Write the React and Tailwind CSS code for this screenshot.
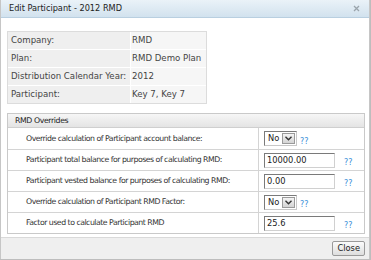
import React from "react";

const font = { fontFamily: '"DejaVu Sans", Verdana, sans-serif' };

function Help() {
  return <span className="text-[8px] text-[#3b8ed8]">??</span>;
}

function Select() {
  return (
    <div className="flex h-[15px] w-[33px] items-stretch border border-[#7a7a7a] border-r-[#c8c8c8] border-b-[#c8c8c8] bg-white">
      <div className="flex flex-1 items-center pl-[3px] text-[8.3px] text-[#222]">No</div>
      <div className="m-[1px] flex w-[13px] items-center justify-center border border-[#9a9a9a] bg-gradient-to-b from-[#f4f4f4] to-[#d4d4d4]">
        <svg width="7" height="5" viewBox="0 0 7 5">
          <path d="M0.5 0.8 L3.5 3.8 L6.5 0.8" fill="none" stroke="#333" strokeWidth="1.4" />
        </svg>
      </div>
    </div>
  );
}

function Input({ value }) {
  return (
    <div className="flex h-[15px] w-[71px] items-center border border-[#7a7a7a] border-r-[#d0d0d0] border-b-[#d0d0d0] bg-white pl-[2px] text-[8.3px] text-[#222]">
      {value}
    </div>
  );
}

export default function App() {
  const info = [
    ["Company:", "RMD"],
    ["Plan:", "RMD Demo Plan"],
    ["Distribution Calendar Year:", "2012"],
    ["Participant:", "Key 7, Key 7"],
  ];
  const rows = [
    ["Override calculation of Participant account balance:", "select"],
    ["Participant total balance for purposes of calculating RMD:", "10000.00"],
    ["Participant vested balance for purposes of calculating RMD:", "0.00"],
    ["Override calculation of Participant RMD Factor:", "select"],
    ["Factor used to calculate Participant RMD", "25.6"],
  ];
  return (
    <div style={font} className="flex h-[260px] w-[371px] flex-col overflow-hidden bg-[#bdbdbd] text-[#333]">
      <div className="flex h-[259px] w-[370px] flex-col border-l border-r border-[#c6c6c6] bg-white">
        <div className="flex h-[18px] items-center justify-between border-b border-[#b9cfe0] bg-gradient-to-b from-[#eaf2f8] to-[#d2e2ee] pl-[8px] pr-[9px]">
          <span className="text-[8.2px] text-[#222]">Edit Participant - 2012 RMD</span>
          <svg width="7" height="7" viewBox="0 0 7 7">
            <path d="M1 1 L6 6 M6 1 L1 6" stroke="#9aa4ac" strokeWidth="1.3" />
          </svg>
        </div>
        <div className="flex flex-1 flex-col px-[6px] pt-[13px]">
          <div className="w-[200px] border border-[#dcdcdc] bg-white">
            {info.map(([l, v], i) => (
              <div key={i} className={`flex h-[17px] ${i > 0 ? "mt-[1px]" : ""}`}>
                <div className="flex w-[122px] items-center bg-[#efefef] pl-[3px] text-[8.6px] text-[#444]">{l}</div>
                <div className="ml-[1px] flex flex-1 items-center bg-[#f6f6f6] pl-[1px] text-[8.6px] text-[#444]">{v}</div>
              </div>
            ))}
          </div>
          <div className="mt-[9px] w-[358px] border border-[#c9c9c9]">
            <div className="flex h-[14px] items-center border-b border-[#cfcfcf] bg-gradient-to-b from-[#f6f6f6] to-[#e4e4e4] pl-[7px] text-[7.8px] tracking-[-0.4px] text-[#222]">
              RMD Overrides
            </div>
            {rows.map(([l, v], i) => (
              <div key={i} className={`flex h-[21px] ${i > 0 ? "border-t border-[#d4d4d4]" : ""}`}>
                <div className="flex w-[251px] items-center whitespace-nowrap border-r border-[#d4d4d4] pl-[18px] text-[7.8px] tracking-[-0.5px] text-[#333]">{l}</div>
                <div className="flex flex-1 items-center pl-[5px]">
                  {v === "select" ? (
                    <>
                      <Select />
                      <span className="ml-[3px]"><Help /></span>
                    </>
                  ) : (
                    <>
                      <Input value={v} />
                      <span className="ml-[9px]"><Help /></span>
                    </>
                  )}
                </div>
              </div>
            ))}
          </div>
          <div className="flex-1" />
        </div>
        <div className="flex h-[22px] items-center justify-end border-t border-[#d9d9d9] bg-[#efefef] pr-[4px]">
          <div className="flex h-[15px] items-center rounded-[2px] border border-[#9a9a9a] bg-gradient-to-b from-[#fbfbfb] to-[#dedede] px-[4px] text-[8.3px] text-[#222]">
            Close
          </div>
        </div>
      </div>
    </div>
  );
}
